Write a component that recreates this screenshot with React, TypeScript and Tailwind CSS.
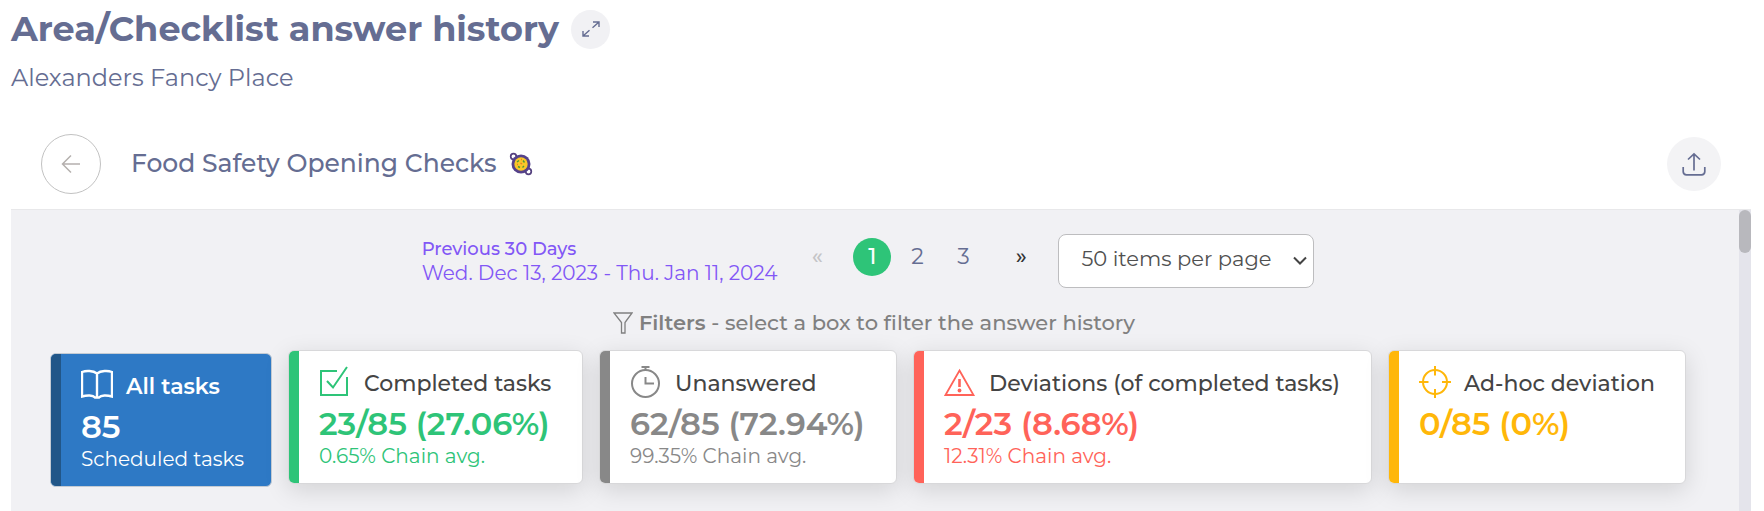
import type { ReactNode } from "react"
import clsx from "clsx"

type Task = {
  label: string
  value: string
  note?: string
  icon: ReactNode
  bar: string
  text: string
  active?: boolean
}

const iconProps = {
  viewBox: "0 0 32 32",
  fill: "none",
  stroke: "currentColor",
  strokeWidth: 2,
  "aria-hidden": true,
}

const tasks: Task[] = [
  {
    label: "All tasks",
    value: "85",
    note: "Scheduled tasks",
    bar: "bg-[#215688]",
    text: "text-white",
    active: true,
    icon: (
      <svg {...iconProps} strokeWidth={2.4} className="size-8 shrink-0">
        <path d="M16 4.5C12 1.500 5 1.500 1 3V27.500C6 26 12 26 14 28.500H18C20 26 26 26 31 27.500V3C27 1.500 20 1.500 16 4.500V28" />
      </svg>
    ),
  },
  {
    label: "Completed tasks",
    value: "23/85 (27.06%)",
    note: "0.65% Chain avg.",
    bar: "bg-[#2ec478]",
    text: "text-[#2ec478]",
    icon: (
      <svg {...iconProps} className="size-8 shrink-0">
        <path d="M18 5H2V29H28V11" />
        <path d="M8 15L14 21.500L28 1" />
      </svg>
    ),
  },
  {
    label: "Unanswered",
    value: "62/85 (72.94%)",
    note: "99.35% Chain avg.",
    bar: "bg-[#888888]",
    text: "text-[#888888]",
    icon: (
      <svg {...iconProps} className="size-8 shrink-0">
        <circle cx="15.500" cy="17.500" r="13.500" />
        <path d="M11.500 1H19.500M15.500 1V5M15.500 11V17.500H24" />
      </svg>
    ),
  },
  {
    label: "Deviations (of completed tasks)",
    value: "2/23 (8.68%)",
    note: "12.31% Chain avg.",
    bar: "bg-[#ff6359]",
    text: "text-[#ff6359]",
    icon: (
      <svg {...iconProps} strokeWidth={1.8} className="size-8 shrink-0">
        <path d="M15.500 4.500L29.500 29H1.500Z" />
        <path d="M15.500 13V21" strokeWidth={2.6} />
        <circle cx="15.500" cy="24.500" r="1.900" fill="currentColor" stroke="none" />
      </svg>
    ),
  },
  {
    label: "Ad-hoc deviation",
    value: "0/85 (0%)",
    bar: "bg-[#ffb709]",
    text: "text-[#ffb709]",
    icon: (
      <svg {...iconProps} className="size-8 shrink-0">
        <circle cx="16" cy="16" r="12" />
        <path d="M16 0V9.500M16 23V32M0 16H9.500M23 16H32" />
      </svg>
    ),
  },
]

function TaskCard({ task }: { task: Task }) {
  return (
    <button
      type="button"
      aria-pressed={!!task.active}
      className={clsx(
        "flex h-[134px] overflow-hidden rounded-md border text-left whitespace-nowrap",
        task.active
          ? "mt-[3px] border-[#c4cbd3] bg-[#2e79c5]"
          : "border-[#d8d8da] bg-white shadow-[0_6px_24px_rgba(0,0,0,0.13)]"
      )}
    >
      <span className={clsx("w-[10px] shrink-0 self-stretch", task.bar)} />
      <span className={clsx("flex flex-col pt-[15px] pl-5", task.text)}>
        <span className="flex items-start gap-[13px]">
          {task.icon}
          <span
            className={clsx(
              "text-[22px] leading-9",
              task.active ? "font-semibold" : "font-medium text-[#444444]"
            )}
          >
            {task.label}
          </span>
        </span>
        <span className="mt-1 text-[32px] leading-9 font-semibold">{task.value}</span>
        {task.note && <span className="text-[20px] leading-7">{task.note}</span>}
      </span>
    </button>
  )
}

function PaellaIcon() {
  return (
    <svg viewBox="0 0 24 24" fill="none" className="size-6" aria-hidden="true">
      <circle cx="4.500" cy="4.500" r="2.800" stroke="#54407e" strokeWidth="1.700" />
      <circle cx="19.500" cy="19.500" r="2.800" stroke="#54407e" strokeWidth="1.700" />
      <circle cx="12" cy="12" r="9.500" fill="#55428a" />
      <circle cx="12" cy="12" r="6.700" fill="#f9c828" />
      <path d="M8 10L10 8.500M14 8.500L15.500 10.500M9 14.500L11 15.500M15 14L13.500 15.500" stroke="#4f9a35" strokeWidth="1.400" />
      <path d="M11.500 11L13 12M8 12.500H9M12 7.500H13" stroke="#e8792e" strokeWidth="1.400" />
    </svg>
  )
}

export default function App() {
  return (
    <div className="flex min-h-screen flex-col bg-white pr-[13px] pl-[11px] font-[Montserrat,Inter,sans-serif] text-[#656d92]">
      <header className="pt-2">
        <div className="flex items-center gap-3">
          <h1 className="text-[35px] leading-[42px] font-bold">Area/Checklist answer history</h1>
          <button
            type="button"
            aria-label="Expand"
            className="flex size-[39px] items-center justify-center rounded-full bg-[#f1f1f4]"
          >
            <svg viewBox="0 0 20 20" fill="none" stroke="currentColor" strokeWidth="1.400" className="size-5" aria-hidden="true">
              <path d="M12 3H18V8M18 3L11.500 8.800M8.500 11.200L2 17M2 12V17H8" />
            </svg>
          </button>
        </div>
        <p className="mt-3 text-[24px] leading-8">Alexanders Fancy Place</p>
      </header>

      <div className="mt-10 flex items-center pr-[30px] pb-[15px] pl-[30px]">
        <button
          type="button"
          aria-label="Back"
          className="flex size-[60px] items-center justify-center rounded-full border border-[#c2c2c2] text-[#b5b0ae]"
        >
          <svg viewBox="0 0 20 20" fill="none" stroke="currentColor" strokeWidth="1.500" className="size-5" aria-hidden="true">
            <path d="M19 10H1.500M10 1.500L1.500 10L10 18.500" />
          </svg>
        </button>
        <h2 className="ml-[30px] pb-[2px] text-[25px] leading-8 font-medium">Food Safety Opening Checks</h2>
        <span className="ml-3">
          <PaellaIcon />
        </span>
        <button
          type="button"
          aria-label="Export"
          className="ml-auto flex size-[54px] items-center justify-center rounded-full bg-[#f3f3f5]"
        >
          <svg viewBox="0 0 24 24" fill="none" stroke="currentColor" strokeWidth="1.700" className="size-6" aria-hidden="true">
            <path d="M12 18.500V2M6 7.500L12 1.800L18 7.500M1.200 15V19.500Q1.200 22.800 4.500 22.800H19.500Q22.800 22.800 22.800 19.500V15" />
          </svg>
        </button>
      </div>

      <main className="flex flex-1 border-t border-[#e8e8ea] bg-[#f1f1f4]">
        <div className="min-w-0 flex-1 pt-6 pr-[53px] pb-6 pl-[39px]">
          <div className="flex items-center justify-center">
            <button type="button" className="text-left text-[#8257f6]">
              <span className="block text-[18px] leading-6 font-medium">Previous 30 Days</span>
              <span className="block text-[20px] leading-6">Wed. Dec 13, 2023 - Thu. Jan 11, 2024</span>
            </button>
            <nav aria-label="Pagination" className="mb-2 ml-5 flex items-center text-[22px] leading-8">
              <a href="#prev" aria-label="Previous page" className="w-10 text-center font-medium text-[#c4c4c6]">«</a>
              <a
                href="#1"
                aria-current="page"
                className="ml-4 flex size-[38px] items-center justify-center rounded-full bg-[#2ec478] font-medium text-white"
              >
                1
              </a>
              <a href="#2" className="ml-[3px] w-[46px] text-center">2</a>
              <a href="#3" className="w-[46px] text-center">3</a>
              <a href="#next" aria-label="Next page" className="ml-3 w-[46px] text-center font-medium text-[#333333]">»</a>
            </nav>
            <div className="relative ml-[14px]">
              <select
                aria-label="Items per page"
                className="h-[54px] w-[256px] appearance-none rounded-lg border border-[#bdbdbf] bg-white pr-8 pb-1 pl-[22px] text-[21px] text-[#505050]"
              >
                <option>50 items per page</option>
                <option>100 items per page</option>
              </select>
              <svg
                viewBox="0 0 14 10"
                fill="none"
                stroke="#444444"
                strokeWidth="2"
                className="pointer-events-none absolute top-[22px] right-[7px] h-[10px] w-[14px]"
                aria-hidden="true"
              >
                <path d="M1 1.500L7 7.500L13 1.500" />
              </svg>
            </div>
          </div>

          <p className="mt-[19px] flex items-center justify-center gap-[6px] pl-3 text-[21px] leading-8 font-medium text-[#808080]">
            <svg viewBox="0 0 20 22" fill="none" stroke="currentColor" strokeWidth="1.300" className="h-[22px] w-5" aria-hidden="true">
              <path d="M1 1H19L12 10.500V21H8.500V10.500Z" />
            </svg>
            <span>
              <strong className="font-semibold">Filters</strong> - select a box to filter the answer history
            </span>
          </p>

          <div className="mt-[11px] grid grid-cols-[222fr_295fr_298fr_459fr_298fr] items-start gap-4">
            {tasks.map((task) => (
              <TaskCard key={task.label} task={task} />
            ))}
          </div>
        </div>
        <div className="w-3 bg-[#e4e4eb]">
          <div className="h-[43px] rounded-full bg-[#b8b8bd]" />
        </div>
      </main>
    </div>
  )
}
